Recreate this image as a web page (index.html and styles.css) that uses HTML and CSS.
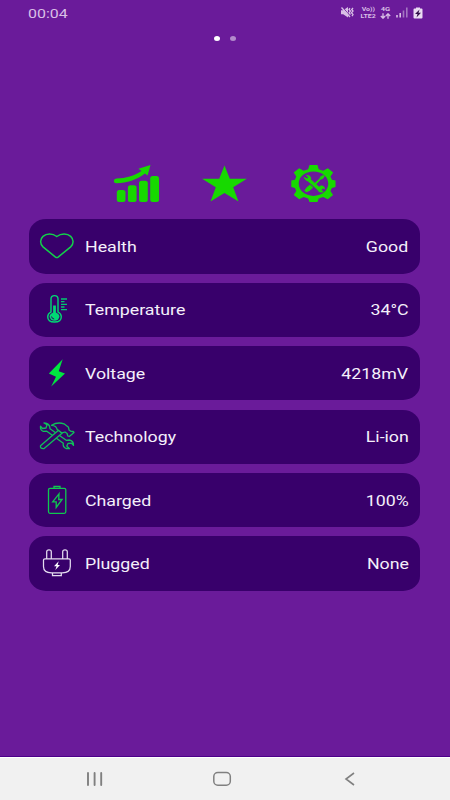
FILE: index.html
```html
<!DOCTYPE html>
<html lang="en">
<head>
<meta charset="utf-8">
<title>Battery</title>
<link rel="stylesheet" href="styles.css">
</head>
<body>
<div class="screen">
  <header class="status">
    <span class="clock">00:04</span>
    <div class="signals">
      <svg class="mute" width="15" height="13" viewBox="0 0 15 13"><path d="M1 4.3h2.2L8 1v10.500L3.200 8.300H1z" fill="currentColor"/><path d="M2.500 1 10.500 10.500" stroke="#6a1b9a" stroke-width="1"/><path d="M1.500 1.500 10 11M10 2.200l-1 1.300 1.500 1.600-1.500 1.700 1.500 1.700M13 2l-1.300 1.500L13 5.100l-1.500 1.700L13 8.500l-1 1.700" fill="none" stroke="currentColor" stroke-width="1.300"/></svg>
      <span class="tiny lte"><span>Vo))</span><span>LTE2</span></span>
      <span class="tiny net"><span>4G</span><svg width="11" height="6" viewBox="0 0 11 6"><path d="M3 .3v4.400M.8 3 3 5.200 5.200 3M8 5.700V1.300M5.800 3 8 .8 10.200 3" fill="none" stroke="currentColor" stroke-width="1.300"/></svg></span>
      <svg class="bars" width="12" height="11" viewBox="0 0 12 11"><path d="M.2 8h1.600v2.500H.2zM3.400 6H5v4.500H3.400z" fill="currentColor"/><path d="M6.700 3.500h1.600v7H6.700zM10 .5h1.600v10H10z" fill="#a477c2"/></svg>
      <svg class="cell" width="10" height="12" viewBox="0 0 10 12"><path d="M3 .5h4v1h1.500q1 0 1 1v8q0 1-1 1h-7q-1 0-1-1v-8q0-1 1-1H3z" fill="#eadcf2"/><path d="M6.500 2.500 2 7h2.500L3.500 10.500 8 5.800H5.500z" fill="#32104a"/></svg>
    </div>
  </header>
  <div class="pager"><i class="dot on"></i><i class="dot"></i></div>
  <nav class="actions">
    <svg width="50" height="44" viewBox="0 0 50 44">
      <rect x="5.800" y="28" width="8.700" height="12" rx="2.500"/><rect x="16.900" y="23.200" width="8.700" height="16.800" rx="2.500"/><rect x="28" y="18.800" width="8.800" height="21.200" rx="2.500"/><rect x="39.200" y="14" width="8.800" height="26" rx="2.500"/>
      <path d="M5.500 16.500C15 16.200 23 13.800 30.500 9L27.400 6.800 39.500 3 36.600 13.600 34 11.500C25.500 18 16 21 5.500 21.200q-2.700-.2-2.700-2.300t2.700-2.400z"/>
    </svg>
    <svg width="50" height="44" viewBox="0 0 50 44"><path d="m24.500 3.500 5.300 13.300h17.100L33.200 25.200 38.500 39.500 24.500 31 10.500 39.500 15.800 25.200 2.100 16.800h17.100z"/></svg>
    <svg width="50" height="44" viewBox="0 0 50 44">
      <path fill-rule="evenodd" d="M20.500 3h8l1.200 4.200 4.500 1.600 4.600-2.500 5.300 4.300-2.700 3.900 1.500 3.200 3.600.800v6.500l-3.600.900-1.500 3.200 2.700 3.900-5.300 4.300-4.600-2.300-4.500 1.600-1.200 3.400h-8l-1.400-3.400-4.500-1.600-4.400 2.300-5.500-4.300 2.600-3.900-1.400-3.200-3.600-.9v-6.500l3.600-.8 1.400-3.200-2.600-3.900 5.500-4.300 4.400 2.500 4.500-1.600zM24.500 9.500C16 9.500 9.700 14.800 9.700 21.600s6.300 12.300 14.800 12.300 14.800-5.500 14.800-12.300S33 9.500 24.500 9.500z"/>
      <path d="m19.500 17.500 10.500 9.500" stroke="#17d900" stroke-width="3.600"/>
      <path d="M15.200 15.300q1.200 4.400 5.500 3.500L22 16q-1-3-4.600-2.800l2 2-1.200 1.800zM29 26.500q-.5 3.500 3.300 3.800l2-.5-2-1.800 1.500-2 2 1q-1-4-4.500-3z" stroke="#17d900" stroke-width=".6"/>
      <path d="m24.500 22.500 6.500-6 .5-1.800 3-1.500 1 1-1.800 2.500-2 .5-5.800 6.300" stroke="#17d900" stroke-width=".7"/>
      <path d="m17.800 25.200 3.300-2.700 3.100 3-3.400 3.200-3.500 1.500-2-1.800z"/>
    </svg>
  </nav>
  <main class="cards">
    <section class="card">
      <svg class="icon" viewBox="0 0 45 45"><path d="M22.800 12.500C18.500 9.200 12.500 9.200 9 12.400c-3.300 3.100-3 7.500 0 10.500L21.500 33.100q1.300 1 2.600 0L36.700 22.900c3-3 3.300-7.400 0-10.500-3.500-3.200-9.500-3.200-13.900.1z" fill="none" stroke="#12d14a" stroke-width="1.500"/></svg>
      <span class="label">Health</span><span class="value">Good</span>
    </section>
    <section class="card">
      <svg class="icon" viewBox="0 0 45 45"><path d="M17 25V11.800q0-3.200 3.500-3.200t3.500 3.200V25q3.300 1.800 3.300 4.700 0 5.300-6.800 5.300t-6.800-5.300q0-2.900 3.300-4.700z" fill="none" stroke="#00d974" stroke-width="1.400"/><ellipse cx="20.500" cy="29.600" rx="4.900" ry="4.100" fill="#00d974"/><path d="M20.500 18.500v9" stroke="#00d974" stroke-width="2.800"/><path d="M17.500 29.500q.3 2.300 2.700 2.500" fill="none" stroke="#38006b"/><path d="M27 12h6M27 14.700h3.500M27 17.300h6M27 20h3.500M27 22.600h6" stroke="#00c970" stroke-width="1.300"/></svg>
      <span class="label">Temperature</span><span class="value">34°C</span>
    </section>
    <section class="card">
      <svg class="icon" viewBox="0 0 45 45"><path d="m28.700 8.200-13.800 14.200 7.100 3.300-4.800 9.700L31 22.600l-6.300-2.300z" fill="#00e640"/></svg>
      <span class="label">Voltage</span><span class="value">4218mV</span>
    </section>
    <section class="card">
      <svg class="icon" viewBox="0 0 45 45"><g fill="#38006b" stroke="#0fc05a" stroke-width="1.300" stroke-linejoin="round"><path d="M10 9 13 10.800 12 14 8.500 14.500 6.500 12.300q-.5 3.800 2.800 5.100l3.500-.2 16.500 12q-.8 4 2.700 5.300l3.500.2-2.700-2.600 1.200-2.700 3.500-.2 2 2.200q.2-4.700-4.300-5.400l-3 .3L16 14.700Q16 9.500 10 9z"/><path d="m24.500 16.200-18 15.500q-.6 3.300 3.300 3L28 19.200z"/><path d="m17.500 11.300q6-3.700 12.500-1.500l4.500 3.500.5 2.600 1.800 1.400 2.400.2.800 1-4.700 4-1.500-.5-.7-2.500-2.100-1.500-3 .9-5-3.700q-.5-3.600-5.500-3.900z"/></g></svg>
      <span class="label">Technology</span><span class="value">Li-ion</span>
    </section>
    <section class="card">
      <svg class="icon" viewBox="0 0 45 45"><g fill="none" stroke="#10c850" stroke-width="1.300"><rect x="14.500" y="10.300" width="17.300" height="25" rx="1.500"/><path d="M20 10V8.500h6V10M25 15.800l-6.300 8h3.500v5.700l5.900-8h-3.400z"/></g></svg>
      <span class="label">Charged</span><span class="value">100%</span>
    </section>
    <section class="card">
      <svg class="icon" viewBox="0 0 45 45"><g fill="none" stroke="#e4dcf0" stroke-width="1.250"><path d="M11 17.800h24q1.300 0 1.300 1.300v6.500q0 6.300-8 6.300H17.500q-8 0-8-6.300v-6.500q0-1.300 1.500-1.300zM12.700 17.500v-6.700q0-2 2.300-2t2.300 2v6.700M28.700 17.500v-6.700q0-2 2.300-2t2.300 2v6.700M18.500 32v2.700h8.800V32"/></g><path d="m24.700 20.300-4.700 5h2.600l-1.300 3.800 4.700-5.200h-2.400z" fill="#fff"/></svg>
      <span class="label">Plugged</span><span class="value">None</span>
    </section>
  </main>
  <footer class="navbar">
    <svg width="18" height="16" viewBox="0 0 18 16"><path d="M2 2v12M8.600 2v12M15.200 2v12" stroke="#808080" stroke-width="1.900" stroke-linecap="round"/></svg>
    <svg class="home" width="20" height="16" viewBox="0 0 20 16"><rect x="1.800" y="1.600" width="16.500" height="12.600" rx="4" fill="none" stroke="#808080" stroke-width="1.500"/></svg>
    <svg width="14" height="16" viewBox="0 0 14 16"><path d="M11 2 3 8l8 6" fill="none" stroke="#808080" stroke-width="1.600"/></svg>
  </footer>
</div>
</body>
</html>
```
FILE: styles.css
```css
* { box-sizing: border-box; }
body { margin: 0; background: #6a1b9a; font-family: Roboto, "Liberation Sans", sans-serif; }
svg { display: block; flex: none; }
.screen { width: 450px; height: 800px; display: flex; flex-direction: column; overflow: hidden; background: #6a1b9a; }
.status { height: 26px; flex: none; display: flex; justify-content: space-between; align-items: center; padding: 0 27px 1px 28px; color: #d9bfe6; }
.clock { font-size: 13.5px; line-height: 16px; transform: scaleX(1.18); transform-origin: left; }
.signals { display: flex; align-items: center; }
.tiny { display: flex; flex-direction: column; align-items: center; justify-content: space-between; font-size: 5.6px; line-height: 6px; font-weight: 700; height: 13px; }
.lte { width: 18px; margin-left: 4px; }
.lte span { transform: scaleX(1.25); }
.net { width: 11px; margin-left: 3px; }
.net span { transform: scaleX(1.35); }
.bars { margin-left: 5px; }
.cell { margin-left: 5px; }
.pager { height: 24px; flex: none; display: flex; justify-content: center; align-items: center; gap: 10.500px; }
.dot { width: 6px; height: 5px; border-radius: 50%; background: #b38bcc; }
.dot.on { background: #fff; }
.actions { margin: 112px 111.500px 0 110.500px; height: 44px; flex: none; display: flex; justify-content: space-between; fill: #17d900; }
.cards { margin: 13.300px 30.500px 0 29px; display: grid; grid-auto-rows: 54.300px; gap: 9.150px; }
.card { display: flex; align-items: center; border-radius: 17px / 15px; background: #38006b; padding: 0 11px 0 5px; color: #f4effa; font-size: 15.200px; line-height: 20px; }
.icon { width: 45px; height: 45px; margin-right: 5.800px; }
.label, .value { padding-top: 1px; transform: scaleX(1.170); transform-origin: left; }
.value { margin-left: auto; transform-origin: right; }
.navbar { height: 43px; flex: none; margin-top: auto; border-top: 1px solid #fff; background: #f1f1f1; display: flex; justify-content: space-between; align-items: center; padding: 0 93px 0 86px; box-shadow: 0 -1px 0 #4c008a; }
.home { margin-right: 3px; }
```
